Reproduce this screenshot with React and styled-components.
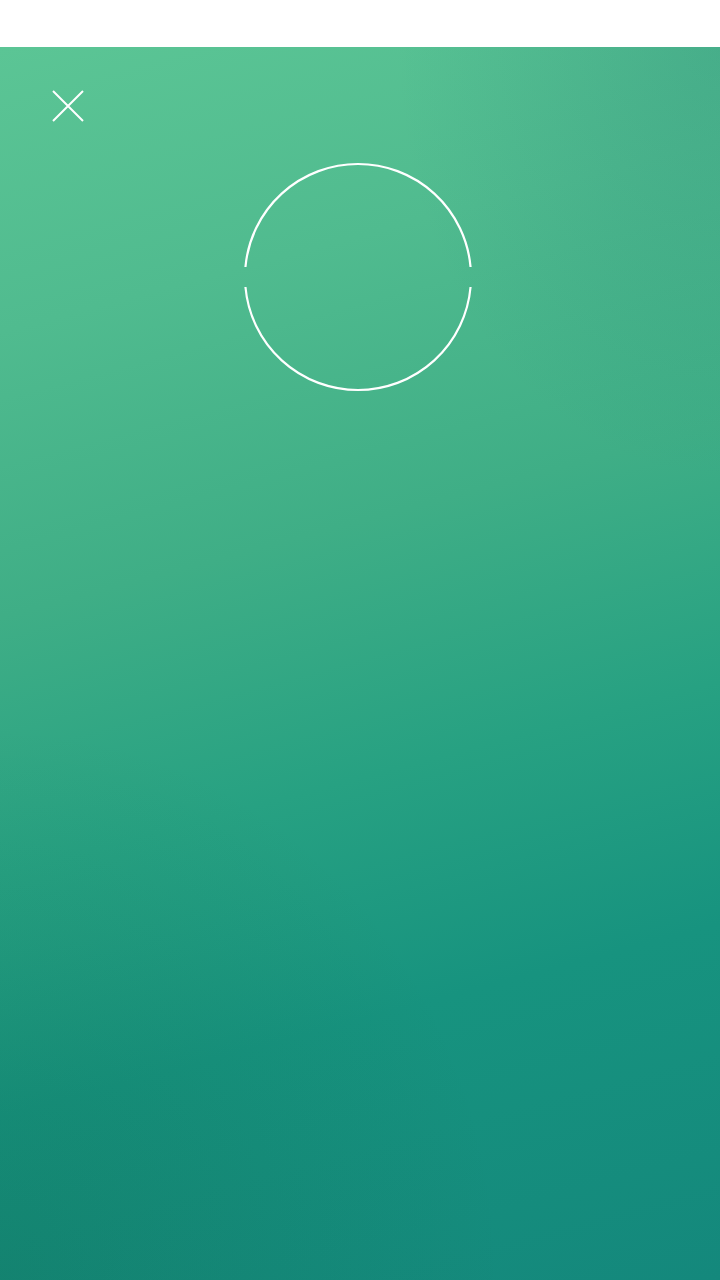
import React from "react";
import styled, { createGlobalStyle } from "styled-components";

const GlobalStyle = createGlobalStyle`
  html, body {
    margin: 0;
    padding: 0;
    height: 100%;
    font-family: "Roboto", "Liberation Sans", sans-serif;
  }
  #root {
    height: 100%;
  }
`;

const Page = styled.div`
  display: flex;
  flex-direction: column;
  height: 1280px;
  background: #fff;
`;

const TopBar = styled.div`
  height: 47px;
  flex-shrink: 0;
  background: #ffffff;
`;

// light green at the top left, teal at the bottom right, a darker green corner bottom left
const Screen = styled.main`
  flex: 1;
  display: flex;
  flex-direction: column;
  padding: 42px 0 0 51px;
  background:
    radial-gradient(ellipse 70% 45% at 0% 100%, rgba(10, 80, 50, 0.18) 0%, rgba(10, 80, 50, 0) 100%),
    radial-gradient(ellipse 45% 35% at 100% 0%, rgba(20, 110, 110, 0.2) 0%, rgba(20, 110, 110, 0) 100%),
    linear-gradient(165deg, #5bc595 0%, #50bb8f 20%, #3fae86 40%, #27a182 58%, #17937f 75%, #14887c 100%);
`;

const CloseButton = styled.button`
  width: 34px;
  height: 34px;
  padding: 0;
  border: none;
  background: transparent;
  cursor: pointer;
  display: flex;
  align-items: center;
  justify-content: center;
`;

const Ring = styled.div`
  align-self: flex-start;
  margin: 39px 0 0 192px;
  width: 230px;
  height: 230px;
`;

const CloseIcon = () => (
  <svg width="34" height="34" viewBox="0 0 34 34">
    <path d="M2 2 L32 32 M32 2 L2 32" stroke="#fff" strokeWidth="2" fill="none" />
  </svg>
);

const SplitCircle = () => {
  const r = 113;
  const c = 115;
  const gap = 10;
  const dx = Math.sqrt(r * r - gap * gap);
  return (
    <svg width="230" height="230" viewBox="0 0 230 230">
      <path
        d={`M ${c - dx} ${c - gap} A ${r} ${r} 0 0 1 ${c + dx} ${c - gap}`}
        stroke="#fff"
        strokeWidth="2.2"
        fill="none"
      />
      <path
        d={`M ${c - dx} ${c + gap} A ${r} ${r} 0 0 0 ${c + dx} ${c + gap}`}
        stroke="#fff"
        strokeWidth="2.2"
        fill="none"
      />
    </svg>
  );
};

export default function App() {
  return (
    <Page>
      <GlobalStyle />
      <TopBar />
      <Screen>
        <CloseButton aria-label="Close">
          <CloseIcon />
        </CloseButton>
        <Ring>
          <SplitCircle />
        </Ring>
      </Screen>
    </Page>
  );
}
